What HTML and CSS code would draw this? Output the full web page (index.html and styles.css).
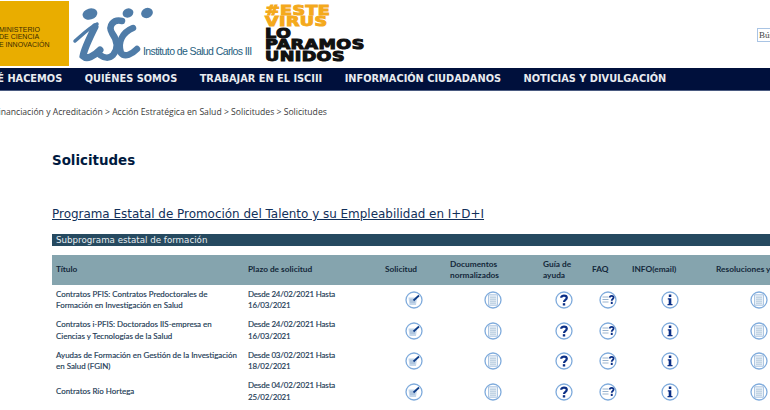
FILE: index.html
```html
<!DOCTYPE html>
<html lang="es">
  <head>
    <meta charset="utf-8" />
    <title>Solicitudes</title>
    <link rel="stylesheet" href="styles.css">
  </head>
  <body>
    <svg class="icon-defs" width="0" height="0">
      <symbol id="ico-form" viewBox="0 0 18 18">
        <circle cx="9" cy="9" r="8" fill="#fff" stroke="#7fabdc" stroke-width="1.300"/>
        <path d="M3.500 6.500h8.500l-1 7.500H4.500z" fill="#c3d6ea"/>
        <path d="M5 9h5M5 11h5" stroke="#8fadcc" stroke-width=".7"/>
        <path d="M8.500 9.500l5.500-5" stroke="#0c3a86" stroke-width="1.700"/>
      </symbol>
      <symbol id="ico-doc" viewBox="0 0 18 18">
        <circle cx="9" cy="9" r="8" fill="#fff" stroke="#7fabdc" stroke-width="1.300"/>
        <rect x="4.500" y="3.800" width="9" height="10.400" fill="#eaf1f8" stroke="#9dbbdb" stroke-width=".8"/>
        <path d="M6 6.200h6M6 8.200h6M6 10.200h6M6 12.200h6" stroke="#9ab4d0" stroke-width=".7"/>
      </symbol>
      <symbol id="ico-help" viewBox="0 0 18 18">
        <circle cx="9" cy="9" r="8" fill="#fff" stroke="#7fabdc" stroke-width="1.300"/>
        <path d="M6.200 6.800C6.200 3.800 11.800 3.800 11.800 6.800C11.800 8.800 9 8.800 9 11" fill="none" stroke="#0b2f86" stroke-width="2.200"/>
        <rect x="7.800" y="12.200" width="2.400" height="2.300" fill="#0b2f86"/>
      </symbol>
      <symbol id="ico-faq" viewBox="0 0 18 18">
        <circle cx="9" cy="9" r="8" fill="#fff" stroke="#7fabdc" stroke-width="1.300"/>
        <path d="M3.500 6h6M3.500 8.500h6M3.500 11h6" stroke="#8fabc9" stroke-width=".9"/>
        <path d="M10.800 6.500C10.800 4.300 14.600 4.300 14.600 6.500C14.600 8 12.700 8 12.700 9.800" fill="none" stroke="#0b2f86" stroke-width="1.800"/>
        <rect x="11.800" y="10.800" width="1.900" height="2.200" fill="#0b2f86"/>
      </symbol>
      <symbol id="ico-info" viewBox="0 0 18 18">
        <circle cx="9" cy="9" r="8" fill="#fff" stroke="#7fabdc" stroke-width="1.300"/>
        <rect x="7.800" y="3.500" width="2.500" height="2.500" fill="#0b2f86"/>
        <path d="M6.800 7.300h3.500v5.700h1.200v1.300h-5v-1.300h1.200V8.600H6.800z" fill="#0b2f86"/>
      </symbol>
    </svg>

    <!-- Cabecera -->
    <header class="top">
      <div class="ministry">
        <span>MINISTERIO</span>
        <span>DE CIENCIA</span>
        <span>E INNOVACIÓN</span>
      </div>
      <div class="isciii">
        <svg class="isc-mark" width="71" height="62" viewBox="0 0 71 62">
          <g fill="#4f7ca8">
            <ellipse cx="17" cy="8" rx="7.500" ry="5.500" transform="rotate(-15 17 8)"/>
            <ellipse cx="55" cy="7" rx="5.500" ry="4.500" transform="rotate(-20 55 7)"/>
            <ellipse cx="74" cy="7" rx="6" ry="5" transform="rotate(-20 74 7)"/>
          </g>
          <g fill="none" stroke="#4f7ca8" stroke-linecap="round">
            <path d="M2 35C9 29 17 21 24 18" stroke-width="3.500"/>
            <path d="M22 21C16 33 11 44 10 50C14 54 21 50 27 44" stroke-width="7"/>
            <path d="M49 15C40 13 35 20 39 27C44 34 46 42 40 49C36 53 31 52 27 49" stroke-width="6.500"/>
            <path d="M60 22C50 26 44 36 48 47C52 52 59 48 64 43" stroke-width="6.500"/>
          </g>
        </svg>
        <span class="isc-name">Instituto de Salud Carlos III</span>
      </div>
      <div class="campaign">
        <div class="orange">#ESTE</div>
        <div class="orange">VIRUS</div>
        <div>LO</div>
        <div>PÁRAMOS</div>
        <div>UNIDOS</div>
      </div>
      <input class="search" type="text" value="Búsqueda">
    </header>

    <nav class="mainnav">
      <a href="#">QUÉ HACEMOS</a>
      <a href="#">QUIÉNES SOMOS</a>
      <a href="#">TRABAJAR EN EL ISCIII</a>
      <a href="#">INFORMACIÓN CIUDADANOS</a>
      <a href="#">NOTICIAS Y DIVULGACIÓN</a>
    </nav>

    <div class="crumbs">Financiación y Acreditación &gt; Acción Estratégica en Salud &gt; Solicitudes &gt; Solicitudes</div>

    <main class="content">
      <h1>Solicitudes</h1>
      <h2><a href="#">Programa Estatal de Promoción del Talento y su Empleabilidad en I+D+I</a></h2>
      <div class="subbar">Subprograma estatal de formación</div>

      <table class="calls">
        <colgroup>
          <col class="c-title"><col class="c-date"><col class="c-app"><col class="c-docs">
          <col class="c-guide"><col class="c-faq"><col class="c-info"><col class="c-res">
        </colgroup>
        <thead>
          <tr>
            <th>Título</th>
            <th>Plazo de solicitud</th>
            <th>Solicitud</th>
            <th>Documentos normalizados</th>
            <th>Guía de ayuda</th>
            <th>FAQ</th>
            <th>INFO(email)</th>
            <th class="nowrap">Resoluciones y notas</th>
          </tr>
        </thead>
        <tbody>
          <tr>
            <td>Contratos PFIS: Contratos Predoctorales de Formación en Investigación en Salud</td>
            <td class="date">Desde 24/02/2021 Hasta 16/03/2021</td>
            <td class="ic"><svg width="18" height="18"><use href="#ico-form"/></svg></td>
            <td class="ic"><svg width="18" height="18"><use href="#ico-doc"/></svg></td>
            <td class="ic"><svg width="18" height="18"><use href="#ico-help"/></svg></td>
            <td class="ic"><svg width="18" height="18"><use href="#ico-faq"/></svg></td>
            <td class="ic"><svg width="18" height="18"><use href="#ico-info"/></svg></td>
            <td class="ic"><svg width="18" height="18"><use href="#ico-doc"/></svg></td>
          </tr>
          <tr>
            <td>Contratos i-PFIS: Doctorados IIS-empresa en Ciencias y Tecnologías de la Salud</td>
            <td class="date">Desde 24/02/2021 Hasta 16/03/2021</td>
            <td class="ic"><svg width="18" height="18"><use href="#ico-form"/></svg></td>
            <td class="ic"><svg width="18" height="18"><use href="#ico-doc"/></svg></td>
            <td class="ic"><svg width="18" height="18"><use href="#ico-help"/></svg></td>
            <td class="ic"><svg width="18" height="18"><use href="#ico-faq"/></svg></td>
            <td class="ic"><svg width="18" height="18"><use href="#ico-info"/></svg></td>
            <td class="ic"><svg width="18" height="18"><use href="#ico-doc"/></svg></td>
          </tr>
          <tr>
            <td>Ayudas de Formación en Gestión de la Investigación en Salud (FGIN)</td>
            <td class="date">Desde 03/02/2021 Hasta 18/02/2021</td>
            <td class="ic"><svg width="18" height="18"><use href="#ico-form"/></svg></td>
            <td class="ic"><svg width="18" height="18"><use href="#ico-doc"/></svg></td>
            <td class="ic"><svg width="18" height="18"><use href="#ico-help"/></svg></td>
            <td class="ic"><svg width="18" height="18"><use href="#ico-faq"/></svg></td>
            <td class="ic"><svg width="18" height="18"><use href="#ico-info"/></svg></td>
            <td class="ic"><svg width="18" height="18"><use href="#ico-doc"/></svg></td>
          </tr>
          <tr>
            <td>Contratos Río Hortega</td>
            <td class="date">Desde 04/02/2021 Hasta 25/02/2021</td>
            <td class="ic"><svg width="18" height="18"><use href="#ico-form"/></svg></td>
            <td class="ic"><svg width="18" height="18"><use href="#ico-doc"/></svg></td>
            <td class="ic"><svg width="18" height="18"><use href="#ico-help"/></svg></td>
            <td class="ic"><svg width="18" height="18"><use href="#ico-faq"/></svg></td>
            <td class="ic"><svg width="18" height="18"><use href="#ico-info"/></svg></td>
            <td class="ic"><svg width="18" height="18"><use href="#ico-doc"/></svg></td>
          </tr>
        </tbody>
      </table>
    </main>
  </body>
</html>
```

FILE: styles.css
```css
html, body {
  margin: 0;
  height: 410px;
  overflow: hidden;
}

body {
  background: #fff;
  font-family: 'DejaVu Sans', Verdana, sans-serif;
  color: #333;
}

.icon-defs {
  display: block;
  height: 0;
}

/* Cabecera */
.top {
  display: flex;
  align-items: flex-start;
  height: 68px;
  width: 900px;
}

.ministry {
  flex: none;
  box-sizing: border-box;
  display: flex;
  flex-direction: column;
  justify-content: center;
  width: 69px;
  height: 65px;
  margin-top: 1px;
  padding-top: 7px;
  overflow: hidden;
  background: #e9ad00;
  color: #3a2c00;
  font-family: 'Liberation Sans', sans-serif;
  font-size: 7px;
  line-height: 7.500px;
  white-space: nowrap;
}

.ministry span {
  margin-left: -1px;
}

.isciii {
  flex: none;
  display: flex;
  align-items: flex-start;
  width: 196px;
  margin-top: 6px;
  position: relative;
}

.isc-mark {
  flex: none;
  margin-left: 4px;
  overflow: visible;
}

.isc-name {
  color: #1f5e7e;
  font-family: 'Liberation Sans', sans-serif;
  font-size: 10.500px;
  white-space: nowrap;
  letter-spacing: -.6px;
  position: absolute;
  left: 74px;
  top: 39px;
}

.campaign {
  flex: none;
  width: 492px;
  margin-top: 5px;
  color: #111;
  font-family: 'DejaVu Sans', sans-serif;
  font-size: 13.500px;
  font-weight: bold;
  line-height: 11.400px;
  letter-spacing: .3px;
  -webkit-text-stroke: 1px currentColor;
  transform: scaleX(1.3);
  transform-origin: left top;
}

.campaign .orange {
  color: #f4a91c;
}

.search {
  flex: none;
  box-sizing: border-box;
  width: 110px;
  height: 14px;
  margin-top: 28px;
  padding: 0 1px;
  border: 1px solid #a9c4e4;
  color: #444;
  font-family: 'Liberation Serif', serif;
  font-size: 9px;
}

/* Menu principal */
.mainnav {
  display: flex;
  box-sizing: border-box;
  gap: 22.500px;
  width: 900px;
  height: 23px;
  margin: 0;
  background: #00103c;
  border-bottom: 1px solid #4a5a80;
  white-space: nowrap;
}

.mainnav a {
  color: #e8ebf0;
  font-size: 9.800px;
  font-weight: bold;
  line-height: 22px;
  text-decoration: none;
}

.mainnav a:first-child {
  margin-left: -19px;
}

.crumbs {
  margin: 15px 0 0 -6px;
  font-family: 'Open Sans', sans-serif;
  font-size: 8.650px;
  line-height: 12px;
  white-space: nowrap;
  color: #3a3a3a;
}

/* Contenido */
.content {
  padding-left: 52px;
  width: 900px;
}

h1 {
  margin: 33px 0 0;
  color: #001a40;
  font-size: 13.400px;
  line-height: 20px;
}

h2 {
  margin: 35px 0 0;
  font-size: 11.950px;
  font-weight: normal;
  line-height: 16px;
}

h2 a {
  color: #12305a;
  text-decoration: underline;
}

.subbar {
  width: 720px;
  height: 12px;
  margin-top: 12px;
  padding-left: 4px;
  background: #264a60;
  color: #e6edf0;
  font-size: 8.700px;
  line-height: 12px;
}

.calls {
  table-layout: fixed;
  width: 754px;
  margin-top: 9px;
  border-collapse: collapse;
  font-family: 'Lato', sans-serif;
}

.c-title { width: 192px; }
.c-date { width: 137px; }
.c-app { width: 65px; }
.c-docs { width: 93px; }
.c-guide { width: 49px; }
.c-faq { width: 40px; }
.c-info { width: 84px; }
.c-res { width: 94px; }

.calls th {
  height: 30px;
  padding: 0 4px;
  background: #85a4ae;
  color: #14283a;
  font-size: 8.300px;
  line-height: 11.500px;
  text-align: left;
}

.calls th.nowrap {
  white-space: nowrap;
}

.calls td {
  height: 30.500px;
  padding: 0 4px;
  color: #1c3a55;
  font-size: 7.950px;
  line-height: 11.500px;
  -webkit-text-stroke: .15px currentColor;
}

.calls td.date {
  letter-spacing: -.15px;
}

.calls td.ic {
  padding: 0;
  text-align: center;
  vertical-align: middle;
}

.calls td.ic svg {
  display: block;
  margin: 0 auto;
}
```
